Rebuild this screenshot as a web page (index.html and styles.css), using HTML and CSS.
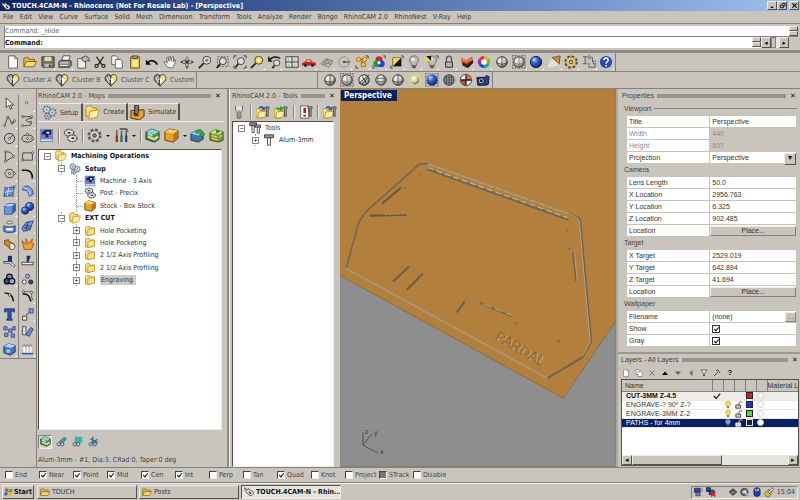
FILE: index.html
```html
<!DOCTYPE html>
<html lang="en">
<head>
<meta charset="utf-8">
<title>TOUCH.4CAM-N - Rhinoceros</title>
<link rel="stylesheet" href="styles.css">
</head>
<body>
<svg class="defs" aria-hidden="true">
<defs>
<radialGradient id="gWhite" cx=".35" cy=".3" r=".8"><stop offset="0" stop-color="#fff"/><stop offset=".5" stop-color="#ccc"/><stop offset="1" stop-color="#555"/></radialGradient>
<radialGradient id="gBlue" cx=".35" cy=".3" r=".8"><stop offset="0" stop-color="#bcd8ff"/><stop offset=".35" stop-color="#3a66d0"/><stop offset="1" stop-color="#0a1c60"/></radialGradient>
<radialGradient id="gYel"><stop offset="0" stop-color="#fff"/><stop offset=".6" stop-color="#eee7b0"/><stop offset="1" stop-color="#e2b81c"/></radialGradient>
<linearGradient id="gFold" x2="1" y2="1"><stop offset="0" stop-color="#fff3a8"/><stop offset="1" stop-color="#e8b02c"/></linearGradient>
</defs>
<symbol id="new" viewBox="0 0 16 16"><path d="M3 1h7l3 3v11H3z" fill="#fff" stroke="#555"/><path d="M10 1v3h3" fill="#ddd" stroke="#555"/></symbol>
<symbol id="open" viewBox="0 0 16 16"><path d="M1 13V4l1-1h4l1 2h6v3" fill="#e8b83c" stroke="#7a5a10"/><path d="M1 13.500l3-6h11.500l-3 6z" fill="#f8dc70" stroke="#7a5a10"/></symbol>
<symbol id="save" viewBox="0 0 16 16"><path d="M1 2h14v12H2l-1-1z" fill="#77744c" stroke="#333"/><path d="M4 2h8v5H4z" fill="#d8d8d0"/><path d="M4 10h8v4H4z" fill="#bbb"/><path d="M9 11h2v3H9z" fill="#333"/></symbol>
<symbol id="print" viewBox="0 0 16 16"><path d="M4 7l2-6h8l-2 6z" fill="#fff" stroke="#444"/><path d="M1 8l2-2h10l2 1v5l-2 2H1z" fill="#888" stroke="#222"/><path d="M2 9h10M2 12h9" stroke="#eee"/></symbol>
<symbol id="props" viewBox="0 0 16 16"><path d="M2 4h9v11H2z" fill="#eee" stroke="#555"/><path d="M7 3l4-2 4 3v3l-2-1-3 2-3-2z" fill="#bbb" stroke="#333"/></symbol>
<symbol id="cut" viewBox="0 0 16 16"><path d="M4 2l6 9M12 2l-6 9" stroke="#222" stroke-width="1.500"/><circle cx="4" cy="12.500" r="1.800" fill="none" stroke="#222" stroke-width="1.300"/><circle cx="12" cy="12.500" r="1.800" fill="none" stroke="#222" stroke-width="1.300"/></symbol>
<symbol id="copy" viewBox="0 0 16 16"><path d="M2 1h5l2 2v8H2z" fill="#fff" stroke="#555"/><path d="M6 5h6l2 2v8H6z" fill="#fff" stroke="#555"/></symbol>
<symbol id="paste" viewBox="0 0 16 16"><path d="M3 2h10v13H3z" fill="#eecb46" stroke="#5c4a14"/><path d="M5 1h6v3H5z" fill="#999" stroke="#444"/><path d="M5 6h6v7H5z" fill="#f8ec9c"/></symbol>
<symbol id="undo" viewBox="0 0 16 16"><path d="M1 5v6h6z" fill="#111"/><path d="M3 9c3-4 9-3 11 2" fill="none" stroke="#111" stroke-width="2"/></symbol>
<symbol id="hand" viewBox="0 0 16 16"><path d="M5 14L1 8l1-1 3 2-1-6 1.500-.500L7 7l0-5.500h1.500L9.500 7l1-5H12l0 6 1.500-3 1.300.500L13 11l-2 4z" fill="#eee" stroke="#666"/></symbol>
<symbol id="rot" viewBox="0 0 16 16"><ellipse cx="8" cy="8" rx="6" ry="2" fill="none" stroke="#666"/><ellipse cx="8" cy="8" rx="2" ry="6" fill="none" stroke="#666"/><path d="M8 6.500v3M6.500 8h3" stroke="#222" stroke-width="1.500"/><path d="M0 8l3-2v4zM16 8l-3-2v4zM8 16l-2-3h4z" fill="#444"/></symbol>
<symbol id="zm" viewBox="0 0 16 16"><circle cx="10" cy="6" r="4.500" fill="#ddd" stroke="#333"/><path d="M6.500 9.500L1 15" stroke="#222" stroke-width="2"/><path d="M8 6h4M10 4v4" stroke="#555"/></symbol>
<symbol id="zmw" viewBox="0 0 16 16"><path d="M3 2h12v11H3z" fill="none" stroke="#555" stroke-dasharray="2 1.500"/><circle cx="9" cy="7" r="4" fill="#ddd" stroke="#333"/><path d="M6 10l-4 5" stroke="#222" stroke-width="2"/></symbol>
<symbol id="zme" viewBox="0 0 16 16"><path d="M1 4V1h3M12 1h3v3M15 12v3h-3M4 15H1v-3" fill="none" stroke="#333"/><circle cx="9" cy="7" r="4" fill="#ddd" stroke="#333"/><path d="M6 10l-3 4" stroke="#222" stroke-width="2"/></symbol>
<symbol id="zms" viewBox="0 0 16 16"><circle cx="10" cy="6" r="4.500" fill="#f2e05a" stroke="#333"/><circle cx="10" cy="6" r="1.500" fill="#fff"/><path d="M6.500 9.500L1 15" stroke="#222" stroke-width="2"/></symbol>
<symbol id="zmu" viewBox="0 0 16 16"><path d="M1 2v5h4M2 6c2-4 8-5 12-2" fill="none" stroke="#111" stroke-width="1.700"/><circle cx="10" cy="9" r="3.500" fill="#ddd" stroke="#333"/><path d="M7.500 12L5 15" stroke="#222" stroke-width="2"/></symbol>
<symbol id="four" viewBox="0 0 16 16"><path d="M1 2h14v12H1zM8 2v12M1 8h14" fill="#ddd" stroke="#333"/><path d="M4 4v3M11 4v3M4 10v3M11 10v3" stroke="#aaa"/></symbol>
<symbol id="car" viewBox="0 0 16 16"><path d="M0 9l3-1 2-3h5l2 3 4 1v3H0z" fill="#d01c1c"/><path d="M5.500 6h4l1 2h-6z" fill="#faa"/><circle cx="4" cy="12" r="1.700" fill="#222"/><circle cx="12" cy="12" r="1.700" fill="#222"/></symbol>
<symbol id="cpl" viewBox="0 0 16 16"><path d="M1 10l6-6 8 3-5 7zM4 7l8 4M7 5l6 5M3 9l6-4M6 12l7-6M4 11l4-6" fill="none" stroke="#776"/><circle cx="6" cy="9" r="2" fill="#a88" /></symbol>
<symbol id="cir" viewBox="0 0 16 16"><circle cx="8" cy="8" r="6" fill="none" stroke="#888"/><path d="M8 8h7" stroke="#222"/><circle cx="8" cy="8" r="1.300" fill="#444"/></symbol>
<symbol id="sel" viewBox="0 0 16 16"><path d="M12 1h3v3M4 15H1v-3" fill="none" stroke="#333"/><path d="M6 5h4M9 9l-3-3" stroke="#333"/><circle cx="4" cy="5" r="2.500" fill="#f4c83c" stroke="#b06a10"/><path d="M9 3h4v4H9z" fill="#f8e070" stroke="#b06a10"/><path d="M7 9h5v4H7z" fill="#f4c83c" stroke="#b06a10"/></symbol>
<symbol id="rgb" viewBox="0 0 16 16"><circle cx="8" cy="5.500" r="4" fill="#d82020"/><circle cx="5.500" cy="10" r="4" fill="#18a030"/><circle cx="10.500" cy="10" r="4" fill="#2040d0"/><path d="M8 6l2 3-2 2-2-2z" fill="#fff"/><path d="M13 1h2v3M1 12v3h2" fill="none" stroke="#333"/></symbol>
<symbol id="diag" viewBox="0 0 16 16"><path d="M3 3h10v10H3z" fill="#111"/><path d="M3.500 3.500h9l-9 9z" fill="#f8e020"/><path d="M13 1h2v3M1 12v3h2" fill="none" stroke="#333"/></symbol>
<symbol id="bulb" viewBox="0 0 16 16"><path d="M5 10C1 6 3 1 8 1s7 5 3 9v2H5z" fill="#bbb" stroke="#666"/><circle cx="7" cy="5" r="2" fill="#eee"/><path d="M6 12h4v3H6z" fill="#555"/></symbol>
<symbol id="bulb2" viewBox="0 0 16 16"><use href="#bulb"/><path d="M1 1h6v6z" fill="#111"/><path d="M1 1v6h6z" fill="#f8e020"/><path d="M12 1h3v3" fill="none" stroke="#333"/></symbol>
<symbol id="lock" viewBox="0 0 16 16"><path d="M5 8V5c0-5 6-5 6 0v3" fill="none" stroke="#555" stroke-width="1.500"/><path d="M4 8h8v6H4z" fill="#999" stroke="#333"/><path d="M6 10h4M6 12h4" stroke="#ddd"/></symbol>
<symbol id="lay" viewBox="0 0 16 16"><path d="M2 8l6 2 7-5v4l-6 6-6-3z" fill="#222"/><path d="M1 3l6 3 7-4v4l-6 5-6-3z" fill="#c8301c"/><path d="M1 3l6 3 7-3v3l-7 3-6-3z" fill="#f07840"/></symbol>
<symbol id="wheel" viewBox="0 0 16 16"><g fill="none" stroke-width="4"><path d="M8 3a5 5 0 0 1 4.330 2.500" stroke="#e0b020"/><path d="M12.330 5.500a5 5 0 0 1 0 5" stroke="#70b830"/><path d="M12.330 10.500A5 5 0 0 1 8 13" stroke="#20a0a0"/><path d="M8 13a5 5 0 0 1-4.330-2.500" stroke="#3048d0"/><path d="M3.670 10.500a5 5 0 0 1 0-5" stroke="#a028b0"/><path d="M3.670 5.500A5 5 0 0 1 8 3" stroke="#e03030"/></g><circle cx="8" cy="8" r="3.200" fill="#fff"/></symbol>
<symbol id="sph" viewBox="0 0 16 16"><circle cx="8" cy="8" r="6" fill="url(#gWhite)" stroke="#222"/><path d="M8 2v12M2 9c4 2 8 2 12 0" fill="none" stroke="#444"/></symbol>
<symbol id="sphs" viewBox="0 0 16 16"><path d="M0 1h16M0 15h16M1 0v16M15 0v16M0 4h16M0 12h16M4 0v16M12 0v16" stroke="#555" stroke-dasharray="1 1"/><circle cx="8" cy="8" r="6" fill="url(#gWhite)" stroke="#333"/><path d="M8 2v12M2 9c4 2 8 2 12 0" fill="none" stroke="#777"/></symbol>
<symbol id="sphc" viewBox="0 0 16 16"><circle cx="8" cy="8" r="6" fill="url(#gWhite)" stroke="#222"/><path d="M2 12L14 2M5 13l8-8M6 4l5 8" stroke="#222"/></symbol>
<symbol id="spha" viewBox="0 0 16 16"><circle cx="8" cy="8" r="6" fill="url(#gWhite)" stroke="#333"/><path d="M5 3c-1 3-1 7 0 10M11 3c1 3 1 7 0 10M2 6h12M2 10h12" fill="none" stroke="#666"/></symbol>
<symbol id="sphd" viewBox="0 0 16 16"><circle cx="8" cy="8" r="6" fill="#aaa" stroke="#222"/><path d="M5 3v10M8 2v12M11 3v10M3 5h10M2 8h12M3 11h10" stroke="#444"/></symbol>
<symbol id="sphy" viewBox="0 0 16 16"><circle cx="8" cy="8" r="7" fill="#f0d848"/><circle cx="8" cy="8" r="5" fill="url(#gWhite)"/></symbol>
<symbol id="blue" viewBox="0 0 16 16"><circle cx="8" cy="8" r="6.500" fill="url(#gBlue)" stroke="#0a1850"/></symbol>
<symbol id="blues" viewBox="0 0 16 16"><path d="M0 1h16M0 15h16M1 0v16M15 0v16M0 4h16M0 12h16" stroke="#555" stroke-dasharray="1 1"/><circle cx="8" cy="8" r="6.500" fill="url(#gBlue)"/></symbol>
<symbol id="spot" viewBox="0 0 16 16"><path d="M1 14c0-4 3-9 7-10l6 4c-2 5-6 7-13 6z" fill="#e4ddd0"/><path d="M6 3l9-2-1 9z" fill="#d88830" stroke="#553"/></symbol>
<symbol id="gear" viewBox="0 0 16 16"><circle cx="8" cy="8" r="5.800" fill="none" stroke="#443" stroke-width="3.600" stroke-dasharray="2.600 1.950"/><circle cx="8" cy="8" r="5.300" fill="none" stroke="#443" stroke-width="1"/><circle cx="8" cy="8" r="4" fill="none" stroke="#e8c85c" stroke-width="3"/><circle cx="8" cy="8" r="2" fill="#c9c5bd" stroke="#443"/></symbol>
<symbol id="dim" viewBox="0 0 16 16"><path d="M1 2h5M1 10h5M3.500 2v8M8 9v5h7V9M7 3h5v5" fill="none" stroke="#555"/><circle cx="8" cy="2.500" r="1.500" fill="#eee" stroke="#555"/><path d="M13 7h3v3h-3z" fill="#eee" stroke="#555"/></symbol>
<symbol id="help" viewBox="0 0 16 16"><circle cx="8" cy="8" r="7" fill="#2848b8"/><path d="M5.500 6c0-3.500 5-3.500 5 0 0 2-2.500 2-2.500 4" fill="none" stroke="#fff" stroke-width="1.600"/><circle cx="8" cy="12.200" r="1" fill="#fff"/></symbol>
<symbol id="ball4" viewBox="0 0 16 16"><circle cx="8" cy="8" r="6.500" fill="#eee" stroke="#335"/><path d="M8 8V1.500A6.500 6.500 0 0 1 14.500 8z" fill="#e07048"/><path d="M8 8v6.500A6.500 6.500 0 0 1 1.500 8z" fill="#c84830"/><path d="M8 2v12M2 8h12" stroke="#223" stroke-width="1.500"/></symbol>
<symbol id="cam" viewBox="0 0 16 16"><path d="M1 5h9l3-3 2 2-1 9-3 1H2z" fill="#284088" stroke="#112"/><circle cx="6" cy="9" r="3.500" fill="#9ac" stroke="#112"/><circle cx="6" cy="9" r="1.500" fill="#123"/><path d="M12 2l2-1 1 3" fill="#ddd"/></symbol>
<symbol id="clus" viewBox="0 0 16 16"><path d="M8 15L1.500 8C0 2 6 0 8 3.500z" fill="#777" stroke="#333"/><path d="M8 15l6.500-7C16 2 10 0 8 3.500z" fill="#f0dc78" stroke="#333"/><path d="M3 5l3 6M5 3l2 5" stroke="#ddd" stroke-width="1.500"/><path d="M8 5l3 3-3 5z" fill="#fff"/></symbol>
<symbol id="ptr" viewBox="0 0 16 16"><path d="M4 1v12l3-3 2 5 2-1-2-4h4z" fill="#fff" stroke="#222"/></symbol>
<symbol id="pt" viewBox="0 0 16 16"><circle cx="7" cy="7" r="1.500" fill="#fff" stroke="#444"/></symbol>
<symbol id="pl" viewBox="0 0 16 16"><path d="M2 13L6 2l5 8 3-1" fill="none" stroke="#333"/><g fill="#fff" stroke="#333"><circle cx="2" cy="13" r="1.200"/><circle cx="6" cy="3" r="1.200"/><circle cx="11" cy="10" r="1.200"/><circle cx="14" cy="7" r="1.200"/></g></symbol>
<symbol id="crv" viewBox="0 0 16 16"><path d="M2 2h11v2C4 5 4 8 12 9c3 3-2 5-10 4" fill="none" stroke="#333"/><g fill="#fff" stroke="#333"><circle cx="2" cy="2" r="1.200"/><circle cx="13" cy="2" r="1.200"/><circle cx="12" cy="9" r="1.200"/><circle cx="2" cy="13" r="1.200"/></g></symbol>
<symbol id="circ" viewBox="0 0 16 16"><circle cx="8" cy="8" r="6.300" fill="none" stroke="#333" stroke-width="1.200"/><path d="M8 8l4-4" stroke="#333"/><circle cx="8" cy="8" r="1.300" fill="#fff" stroke="#333"/></symbol>
<symbol id="ell" viewBox="0 0 16 16"><ellipse cx="8" cy="8" rx="7" ry="4.500" fill="none" stroke="#333" stroke-width="1.200"/><g fill="#fff" stroke="#333"><circle cx="8" cy="8" r="1.300"/><circle cx="14" cy="8" r="1.300"/><circle cx="8" cy="3" r="1.300"/></g></symbol>
<symbol id="arc" viewBox="0 0 16 16"><path d="M3 2c6 0 9 3 10 6L3 14z" fill="none" stroke="#333"/><g fill="#fff" stroke="#333"><circle cx="3" cy="2" r="1.300"/><circle cx="13" cy="8" r="1.300"/><circle cx="3" cy="14" r="1.300"/></g></symbol>
<symbol id="rect" viewBox="0 0 16 16"><path d="M2 3.500h12v9H2z" fill="none" stroke="#333"/><g fill="#fff" stroke="#333"><circle cx="14" cy="3.500" r="1.300"/><circle cx="2" cy="12.500" r="1.300"/></g></symbol>
<symbol id="poly" viewBox="0 0 16 16"><path d="M5 3h6l3 5-3 5H5L2 8z" fill="none" stroke="#333"/><circle cx="8" cy="8" r="1.300" fill="#fff" stroke="#333"/><circle cx="14" cy="8" r="1.300" fill="#fff" stroke="#333"/></symbol>
<symbol id="fil" viewBox="0 0 16 16"><path d="M1 4h5c5 0 8 3 8 10" fill="none" stroke="#111" stroke-width="2"/></symbol>
<symbol id="srf" viewBox="0 0 16 16"><path d="M3 4l11-2-2 11-11 1z" fill="#6890d8" stroke="#223a80"/><path d="M7 3L5 14M2 9l11-2" stroke="#dfe8fa"/><g fill="#fff" stroke="#333"><circle cx="3" cy="4" r="1.200"/><circle cx="14" cy="2" r="1.200"/><circle cx="12" cy="13" r="1.200"/></g></symbol>
<symbol id="bend" viewBox="0 0 16 16"><path d="M2 3l5-2c5 1 8 5 8 10l-5 3c0-5-3-8-8-8z" fill="#7ea2e0" stroke="#223a80"/><path d="M2 3c5 0 9 4 9 10" fill="none" stroke="#dfe8fa"/></symbol>
<symbol id="box" viewBox="0 0 16 16"><path d="M2 5l4-3h9v9l-4 4H2z" fill="#3c64b8" stroke="#1a2c68"/><path d="M2 5h9v10H2z" fill="#6c94dc"/><path d="M2 5l4-3h9l-4 3z" fill="#c0d4f8"/></symbol>
<symbol id="balls" viewBox="0 0 16 16"><circle cx="10.500" cy="5.500" r="5" fill="url(#gBlue)" stroke="#1a2c68"/><circle cx="5" cy="10.500" r="4.500" fill="url(#gBlue)" stroke="#1a2c68"/></symbol>
<symbol id="cyl" viewBox="0 0 16 16"><ellipse cx="8" cy="3" rx="4" ry="1.800" fill="#ddd" stroke="#555"/><path d="M1 7c4 2 10 2 14 0v7c-4 2-10 2-14 0z" fill="#5c84d0" stroke="#223a80"/><path d="M4 10h8v3H4z" fill="#fff"/></symbol>
<symbol id="mesh" viewBox="0 0 16 16"><path d="M1 10l5-7 9-2-4 11-8 2z" fill="#7898d8" stroke="#223a80"/><path d="M4 6l9 2M3 9l9 2M9 2L6 13" stroke="#1c3070"/></symbol>
<symbol id="puz" viewBox="0 0 16 16"><path d="M2 3l5-1 1 3 4 1 3 4-3 4-4-1-2-3-4-2z" fill="#d8871c" stroke="#6a3c08"/><path d="M8 8l3-2 4 4-2 4h-4z" fill="#f4ecd0" stroke="#654"/></symbol>
<symbol id="expl" viewBox="0 0 16 16"><path d="M1 3l5 5V1l3 6 5-6-1 6h3l-3 7H4z" fill="#f0a030" stroke="#a05008"/></symbol>
<symbol id="trim" viewBox="0 0 16 16"><path d="M6 1h5v8H6z" fill="#1c3070"/><path d="M1 8h8l6 5-2 2-5-5H1z" fill="#eee" stroke="#333"/></symbol>
<symbol id="split" viewBox="0 0 16 16"><path d="M7 1h5l-3 8H7z" fill="#1c3070"/><path d="M1 9h14v3H1z" fill="#eee" stroke="#333"/></symbol>
<symbol id="grp" viewBox="0 0 16 16"><circle cx="8" cy="5" r="3.500" fill="#889" stroke="#112" stroke-width="1.500"/><circle cx="5" cy="10" r="3.500" fill="#446" stroke="#112" stroke-width="1.500"/><circle cx="11" cy="10" r="3.500" fill="#9ad" stroke="#112" stroke-width="1.500"/></symbol>
<symbol id="ungrp" viewBox="0 0 16 16"><circle cx="8" cy="4" r="2.500" fill="#9ab8f0" stroke="#336"/><circle cx="4" cy="11" r="2.500" fill="#fff" stroke="#333"/><circle cx="12" cy="11" r="2.500" fill="#445" stroke="#112"/></symbol>
<symbol id="ptc" viewBox="0 0 16 16"><path d="M2 4c6-1 10 3 11 10" fill="none" stroke="#111" stroke-width="1.800"/><circle cx="8" cy="6" r="1.500" fill="#fff" stroke="#333"/></symbol>
<symbol id="ptc2" viewBox="0 0 16 16"><path d="M2 5c6-1 9 3 10 9" fill="none" stroke="#111" stroke-width="1.800"/><path d="M3 2h10v7" fill="none" stroke="#666"/><g fill="#fff" stroke="#333"><circle cx="3" cy="2" r="1.300"/><circle cx="13" cy="3" r="1.300"/><circle cx="13" cy="11" r="1.300"/></g></symbol>
<symbol id="txt" viewBox="0 0 16 16"><path d="M2 1h12v4h-1.500L12 3.500h-2V13l1.500 1v1h-7v-1L6 13V3.500H4L3.500 5H2z" fill="#2c58b4" stroke="#1a2c68"/></symbol>
<symbol id="mov" viewBox="0 0 16 16"><path d="M2 10h5v5H2z" fill="#eee" stroke="#333"/><path d="M10 1h5v5h-5z" fill="#7ea2e0" stroke="#223a80"/><path d="M6 9l4-3" stroke="#333"/></symbol>
<symbol id="arr" viewBox="0 0 16 16"><g fill="#7ea2e0" stroke="#223a80"><path d="M1 2h4v4H1zM7 5h4v4H7zM12 2h3v4h-3zM2 10h4v4H2zM10 11h4v4h-4z"/></g></symbol>
<symbol id="rotc" viewBox="0 0 16 16"><path d="M2 2h4v10H2z" fill="#eee" stroke="#333"/><path d="M12 3l3 2-5 9-4-2z" fill="#6890d8" stroke="#223a80"/></symbol>
<symbol id="boxed" viewBox="0 0 16 16"><path d="M1 4l6-3 8 2v8l-6 4-8-3z" fill="#4870c0" stroke="#1a2c68"/><path d="M1 4l6-3 8 2-5 3z" fill="#b8d0f8"/><path d="M4 8h5v4H4z" fill="#9cc0f4"/></symbol>
<symbol id="ups" viewBox="0 0 16 16"><path d="M1 13h14" stroke="#2c58b4" stroke-width="2"/><path d="M4 12V3M8 12V3M12 12V3" stroke="#fff" stroke-width="2"/><path d="M2.500 4.500L4 2l1.500 2.500M6.500 4.500L8 2l1.500 2.500M10.500 4.500L12 2l1.500 2.500" fill="none" stroke="#555"/></symbol>
<symbol id="gears" viewBox="0 0 16 16"><g fill="none" stroke="#667" stroke-width="2.500" stroke-dasharray="1.500 1"><circle cx="5" cy="5" r="3.300"/><circle cx="11" cy="8" r="3.300"/><circle cx="6" cy="12" r="2.600"/></g><g fill="#dfe6ee" stroke="#7890ac"><circle cx="5" cy="5" r="3"/><circle cx="11" cy="8" r="3"/><circle cx="6" cy="12" r="2.300"/></g><g fill="#667"><circle cx="5" cy="5" r="1"/><circle cx="11" cy="8" r="1"/><circle cx="6" cy="12" r="1"/></g></symbol>
<symbol id="gear1" viewBox="0 0 16 16"><circle cx="8" cy="8" r="6" fill="none" stroke="#555" stroke-width="3" stroke-dasharray="2.700 2"/><circle cx="8" cy="8" r="5" fill="#dcdcdc" stroke="#666"/><circle cx="8" cy="8" r="2" fill="#888" stroke="#333"/></symbol>
<symbol id="post" viewBox="0 0 16 16"><ellipse cx="6.500" cy="5" rx="5" ry="3.500" fill="#ddd" stroke="#555" stroke-width="1.500" stroke-dasharray="2 .700"/><ellipse cx="10" cy="11" rx="5" ry="3.500" fill="#ddd" stroke="#555" stroke-width="1.500" stroke-dasharray="2 .700"/><path d="M5 5h3M9 11h3" stroke="#222" stroke-width="1.500"/></symbol>
<symbol id="mach" viewBox="0 0 16 16"><path d="M1 1h14v14H1z" fill="#7486bc"/><path d="M3 5l4-3h6v5h-3v3H7V7H3z" fill="#16204c"/><path d="M8 4h3v2H8z" fill="#dfe8fa"/><path d="M2 12h12v2H2z" fill="#cdd8f0"/></symbol>
<symbol id="fold" viewBox="0 0 16 16"><path d="M2 3l3-1h2l1 2h6v8l-8 2-4-1z" fill="url(#gFold)" stroke="#b08420"/><path d="M5 6l9-2v8l-9 2z" fill="#fbe486" stroke="#c0922c"/></symbol>
<symbol id="folds" viewBox="0 0 16 16"><path d="M1 2l3-1h3l1 2h4v8l-8 2-3-1z" fill="url(#gFold)" stroke="#b08420"/><path d="M5 7l10-2-2 8-9 2z" fill="#fdf0a8" stroke="#c0922c"/></symbol>
<symbol id="stock" viewBox="0 0 16 16"><path d="M1 4l5-3 9 2v8l-5 4-9-2z" fill="#e8a028" stroke="#5c3a08"/><path d="M1 4l5-3 9 2-5 3z" fill="#fbd060"/><path d="M10 6v9l5-4V3z" fill="#b87418"/></symbol>
<symbol id="sim" viewBox="0 0 16 16"><path d="M1 6l14-1v7l-5 4-9-2z" fill="#e8a028" stroke="#4c3008"/><path d="M3 8l6 1v3H5z" fill="#5c3a08"/><path d="M5 0h4v8L7 10 5 8z" fill="#777" stroke="#222"/></symbol>
<symbol id="tl" viewBox="0 0 16 16"><path d="M3 2v12M8 3v11M13 3v11" stroke="#555" stroke-width="1.500"/><path d="M3 8v7" stroke="#c02020" stroke-width="2.500"/><path d="M8 8v7" stroke="#208040" stroke-width="2.500"/><path d="M13 8v7" stroke="#2040b0" stroke-width="2.500"/><path d="M6 1h7l2 3" fill="none" stroke="#666" stroke-width="2"/></symbol>
<symbol id="stk" viewBox="0 0 16 16"><path d="M1 4l6-3 8 3v8l-5 3-9-3z" fill="#3c9460" stroke="#1c3c48"/><path d="M1 4l6-3 8 3-5 3z" fill="#8cd8c0"/><path d="M3 9l7 3 4-3" fill="none" stroke="#f4d860" stroke-width="2.500"/><path d="M3 6l5 2" stroke="#bfe0f8" stroke-width="2"/></symbol>
<symbol id="stkb" viewBox="0 0 16 16"><path d="M1 6l5-3 8 2v7l-5 3-8-2z" fill="#3c78a0" stroke="#1c3c48"/><path d="M1 6l5-3 8 2-5 3z" fill="#9cd0ec"/><path d="M6 5c1-5 8-4 8 1h2l-3 4-3-4h2c0-2-3-2-4 0z" fill="#38b038" stroke="#146014" stroke-width=".600"/></symbol>
<symbol id="stkg" viewBox="0 0 16 16"><path d="M1 5l5-3 9 2v9l-5 2-9-2z" fill="#76a040" stroke="#3c4c10"/><path d="M1 5l5-3 9 2-5 3z" fill="#d8e090"/><path d="M3 8l6 2M3 11l6 2M11 9l3-1" stroke="#e0c860" stroke-width="1.500"/><path d="M8 1l4 3-5 2z" fill="#209020"/></symbol>
<symbol id="tool" viewBox="0 0 16 16"><path d="M4 1v4c0 2 2 2 2 3v7h4V8c0-1 2-1 2-3V1" fill="#ddd" stroke="#555"/><path d="M8 6v9" stroke="#444"/></symbol>
<symbol id="bit" viewBox="0 0 16 16"><path d="M2 1h12v4H2z" fill="#999" stroke="#222"/><path d="M6 5h4v10H6z" fill="#eee" stroke="#333"/></symbol>
<symbol id="bits" viewBox="0 0 16 16"><path d="M1 1h9v4H1z" fill="#888" stroke="#222"/><path d="M4 5h3v9H4z" fill="#eee" stroke="#333"/><path d="M8 4h8v3H8z" fill="#aaa" stroke="#222"/><path d="M11 7h3v8h-3z" fill="#eee" stroke="#333"/></symbol>
<symbol id="ft" viewBox="0 0 16 16"><path d="M0 5l2-1h2l1 2h5v8l-7 1-3-1z" fill="url(#gFold)" stroke="#b08420"/><path d="M3 8l9-1-2 7-8 1z" fill="#fdf0a8" stroke="#c0922c"/><path d="M3 3c2-3 5-2 6 0l2-1-1 4-4-1 1-1c-1-1-2-1-3 0z" fill="#2858b8"/><path d="M11 2h4v2h-1v9h-2V4h-1z" fill="#999" stroke="#333" stroke-width=".700"/></symbol>
<symbol id="ftg" viewBox="0 0 16 16"><path d="M0 5l2-1h2l1 2h5v8l-7 1-3-1z" fill="url(#gFold)" stroke="#b08420"/><path d="M3 8l9-1-2 7-8 1z" fill="#fdf0a8" stroke="#c0922c"/><path d="M2 3h5V1l4 3-4 3V5H2z" fill="#28a030"/><path d="M11 2h4v2h-1v9h-2V4h-1z" fill="#999" stroke="#333" stroke-width=".700"/></symbol>
<symbol id="warn" viewBox="0 0 16 16"><path d="M2 1h9v14H2z" fill="#fff" stroke="#555"/><path d="M5 3h3v6H5zM5 11h3v2H5z" fill="#c01818"/><path d="M10 2h5v2h-1v9h-2V4h-2z" fill="#999" stroke="#333" stroke-width=".700"/></symbol>
<symbol id="gog" viewBox="0 0 16 16"><circle cx="4" cy="12" r="2.500" fill="#bcd" stroke="#234"/><circle cx="9" cy="12" r="2.500" fill="#bcd" stroke="#234"/><path d="M5 8l7-6 3 2-5 6z" fill="#48a8a0" stroke="#255"/></symbol>
<symbol id="gog2" viewBox="0 0 16 16"><path d="M4 1h11v9H4z" fill="#40b4a8"/><circle cx="4" cy="12" r="2.500" fill="#bcd" stroke="#234"/><circle cx="9" cy="12" r="2.500" fill="#bcd" stroke="#234"/></symbol>
<symbol id="gog3" viewBox="0 0 16 16"><path d="M7 1v9M3 4l11 6M14 5l-9 5" stroke="#468" stroke-width="2"/><circle cx="4" cy="12" r="2.500" fill="#9bd" stroke="#248"/><circle cx="10" cy="12" r="2.500" fill="#9bd" stroke="#248"/></symbol>
<symbol id="ybulb" viewBox="0 0 8 10"><path d="M2.500 6C-.500 3.500 1 .500 4 .500S8.500 3.500 5.500 6v1h-3z" fill="currentColor" stroke="#a08a20" stroke-width=".700"/><path d="M3 7h2v2H3z" fill="#555"/></symbol>
<symbol id="ulock" viewBox="0 0 10 10"><path d="M5 5V3c0-3 4-2 4-1" fill="none" stroke="currentColor"/><path d="M1 5h6v4H1z" fill="#ccc" stroke="currentColor"/></symbol>
<symbol id="flag" viewBox="0 0 16 16"><path d="M2 3c2-1 3-1 5 0L6 8C4 7 3 7 1 8z" fill="#e04820"/><path d="M8 3c2 1 4 1 6 0l-1 5c-2 1-4 1-6 0z" fill="#48a830"/><path d="M1 9c2-1 3-1 5 0l-1 5c-2-1-3-1-5 0z" fill="#2860d0"/><path d="M7 9c2 1 4 1 6 0l-1 5c-2 1-4 1-6 0z" fill="#f0c020"/></symbol>
<symbol id="rhino" viewBox="0 0 16 16"><path d="M1 1l4 4 2-3 2 3 5 2 1 4-3 3-4-1-3-3-3-4z" fill="#ddd" stroke="#222"/><path d="M8 8l3 3" stroke="#222" stroke-width="2"/></symbol>
<symbol id="net" viewBox="0 0 16 16"><path d="M1 2h9v7H1z" fill="#2848a8" stroke="#112"/><path d="M3 11h7v3H3z" fill="#8898b8" stroke="#224"/><path d="M12 2c2 2 2 4 0 6" fill="none" stroke="#666"/></symbol>
<symbol id="netx" viewBox="0 0 16 16"><path d="M0 1h7v6H0zM5 5h8v7H5z" fill="#2848a8" stroke="#112"/><path d="M8 8l7 7M15 8l-7 7" stroke="#d82020" stroke-width="2.500"/></symbol>
<symbol id="dia" viewBox="0 0 16 16"><path d="M8 2l7 6-7 6-7-6z" fill="#444"/><path d="M5 7h6v3H5z" fill="#888"/></symbol>
<symbol id="vol" viewBox="0 0 16 16"><circle cx="7" cy="8" r="6" fill="#666" stroke="#333"/><path d="M4 6h3l3-2v8l-3-2H4z" fill="#ddd"/><circle cx="12" cy="12" r="3" fill="#9ab0e0"/></symbol>
<symbol id="mouse" viewBox="0 0 16 16"><path d="M3 5c0-5 10-5 10 0v7c0 4-10 4-10 0z" fill="#2040b8" stroke="#112"/><path d="M5 3h6v3H5z" fill="#f0e8e0"/><path d="M6 3h3v2H6z" fill="#d02020"/></symbol>
<symbol id="pen" viewBox="0 0 16 16"><path d="M1 10l6-6 6 3-4 8H3z" fill="#e8c030" stroke="#543"/><path d="M6 8l8-7 1 3-7 7z" fill="#eee" stroke="#222"/></symbol>
</svg>

<header class="titlebar">
  <svg class="i10"><use href="#rhino"/></svg>
  <h1>TOUCH.4CAM-N - Rhinoceros (Not For Resale Lab) - [Perspective]</h1>
  <div class="winbtns">
    <button aria-label="Minimize"><svg viewBox="0 0 8 8"><path d="M2 6h3" stroke="#000" stroke-width="1.500"/></svg></button>
    <button aria-label="Restore"><svg viewBox="0 0 8 8"><path d="M3 1.500h4v3H5M1.500 3.500h3.500v3H1.500z" fill="none" stroke="#000"/></svg></button>
    <button class="close" aria-label="Close"><svg viewBox="0 0 8 8"><path d="M1.500 1.500l5 5M6.500 1.500l-5 5" stroke="#000" stroke-width="1.200"/></svg></button>
  </div>
</header>
<nav class="menu">
  <div class="items"><a href="#">File</a><a href="#">Edit</a><a href="#">View</a><a href="#">Curve</a><a href="#">Surface</a><a href="#">Solid</a><a href="#">Mesh</a><a href="#">Dimension</a><a href="#">Transform</a><a href="#">Tools</a><a href="#">Analyze</a><a href="#">Render</a><a href="#">Bongo</a><a href="#">RhinoCAM 2.0</a><a href="#">RhinoNest</a><a href="#">V-Ray</a><a href="#">Help</a></div>
</nav>
<section class="command">
  <div class="cmdrow"><output>Command: _Hide</output><div class="spin"><button aria-label="Scroll up"></button><button aria-label="Scroll down"></button></div></div>
  <div class="cmdrow prompt"><label for="cmd">Command:</label><input id="cmd" type="text"><div class="spin"><button aria-label="Up"></button><button aria-label="Down"></button></div><button class="sq" aria-label="Left">◂</button><span class="thumb"></span><span class="trough"></span><button class="sq" aria-label="Right">▸</button><span class="corner"></span></div>
</section>
<div class="bar bar1">
  <div class="std">
<button aria-label="New"><svg><use href="#new"/></svg></button><button aria-label="Open"><svg><use href="#open"/></svg></button><button class="fly" aria-label="Save"><svg><use href="#save"/></svg></button><button class="fly" aria-label="Print"><svg><use href="#print"/></svg></button><button aria-label="Properties"><svg><use href="#props"/></svg></button><button aria-label="Cut"><svg><use href="#cut"/></svg></button><button aria-label="Copy"><svg><use href="#copy"/></svg></button><button aria-label="Paste"><svg><use href="#paste"/></svg></button><button class="fly" aria-label="Undo"><svg><use href="#undo"/></svg></button><button aria-label="Pan"><svg><use href="#hand"/></svg></button><button aria-label="Rotate view"><svg><use href="#rot"/></svg></button><button aria-label="Zoom"><svg><use href="#zm"/></svg></button><button aria-label="Zoom window"><svg><use href="#zmw"/></svg></button><button class="fly" aria-label="Zoom extents"><svg><use href="#zme"/></svg></button><button class="fly" aria-label="Zoom selected"><svg><use href="#zms"/></svg></button><button class="fly" aria-label="Undo view"><svg><use href="#zmu"/></svg></button><button class="fly" aria-label="Viewports"><svg><use href="#four"/></svg></button><button class="fly" aria-label="Named views"><svg><use href="#car"/></svg></button><button class="fly" aria-label="CPlane"><svg><use href="#cpl"/></svg></button><button class="fly" aria-label="Object snap"><svg><use href="#cir"/></svg></button><button class="fly" aria-label="Select"><svg><use href="#sel"/></svg></button><button class="fly" aria-label="Color"><svg><use href="#rgb"/></svg></button><button class="fly" aria-label="Invert"><svg><use href="#diag"/></svg></button><button class="fly" aria-label="Hide"><svg><use href="#bulb"/></svg></button><button class="fly" aria-label="Swap hidden"><svg><use href="#bulb2"/></svg></button><button class="fly" aria-label="Lock"><svg><use href="#lock"/></svg></button><button class="fly" aria-label="Layers"><svg><use href="#lay"/></svg></button><button class="fly" aria-label="Color wheel"><svg><use href="#wheel"/></svg></button><button aria-label="Shade"><svg><use href="#sph"/></svg></button><button class="fly" aria-label="Shade selected"><svg><use href="#sphs"/></svg></button><button class="fly" aria-label="Render"><svg><use href="#blue"/></svg></button><button class="fly" aria-label="Spotlight"><svg><use href="#spot"/></svg></button><button class="fly" aria-label="Options"><svg><use href="#gear"/></svg></button><button class="fly" aria-label="Dimension"><svg><use href="#dim"/></svg></button><button class="fly" aria-label="Help"><svg><use href="#help"/></svg></button>
  </div>
</div>
<div class="bar bar2">
  <div class="clusters">
    <button><svg><use href="#clus"/></svg>Cluster A</button><button><svg><use href="#clus"/></svg>Cluster B</button><button><svg><use href="#clus"/></svg>Cluster C</button><button><svg><use href="#clus"/></svg>Custom</button>
  </div>
  <div class="shade">
<button aria-label="Wireframe"><svg><use href="#sph"/></svg></button><button aria-label="Shaded"><svg><use href="#sphs"/></svg></button><button aria-label="X-ray"><svg><use href="#sphc"/></svg></button><button aria-label="Ghosted"><svg><use href="#spha"/></svg></button><button aria-label="Technical"><svg><use href="#sph"/></svg></button><button aria-label="Glow"><svg><use href="#sphy"/></svg></button><button aria-label="Rendered"><svg><use href="#blues"/></svg></button><button aria-label="Flat"><svg><use href="#sphd"/></svg></button><button aria-label="Analysis"><svg><use href="#ball4"/></svg></button><button aria-label="Capture"><svg><use href="#cam"/></svg></button>
  </div>
</div>

<main>
  <aside class="palette">
    <div class="pgrid">
<button aria-label="Select"><svg><use href="#ptr"/></svg></button><button class="fly" aria-label="Point"><svg><use href="#pt"/></svg></button><button class="fly" aria-label="Polyline"><svg><use href="#pl"/></svg></button><button class="fly" aria-label="Curve"><svg><use href="#crv"/></svg></button><button class="fly" aria-label="Circle"><svg><use href="#circ"/></svg></button><button class="fly" aria-label="Ellipse"><svg><use href="#ell"/></svg></button><button class="fly" aria-label="Arc"><svg><use href="#arc"/></svg></button><button class="fly" aria-label="Rectangle"><svg><use href="#rect"/></svg></button><button class="fly" aria-label="Polygon"><svg><use href="#poly"/></svg></button><button class="fly" aria-label="Fillet"><svg><use href="#fil"/></svg></button><button class="fly" aria-label="Surface"><svg><use href="#srf"/></svg></button><button class="fly" aria-label="Bend"><svg><use href="#bend"/></svg></button><button class="fly" aria-label="Box"><svg><use href="#box"/></svg></button><button class="fly" aria-label="Boolean"><svg><use href="#balls"/></svg></button><button class="fly" aria-label="Project"><svg><use href="#cyl"/></svg></button><button class="fly" aria-label="Mesh"><svg><use href="#mesh"/></svg></button><button aria-label="Join"><svg><use href="#puz"/></svg></button><button aria-label="Explode"><svg><use href="#expl"/></svg></button><button aria-label="Trim"><svg><use href="#trim"/></svg></button><button aria-label="Split"><svg><use href="#split"/></svg></button><button class="fly" aria-label="Group"><svg><use href="#grp"/></svg></button><button aria-label="Ungroup"><svg><use href="#ungrp"/></svg></button><button aria-label="Points on"><svg><use href="#ptc"/></svg></button><button class="fly" aria-label="Edit points"><svg><use href="#ptc2"/></svg></button><button aria-label="Text"><svg><use href="#txt"/></svg></button><button class="fly" aria-label="Move"><svg><use href="#mov"/></svg></button><button aria-label="Array"><svg><use href="#arr"/></svg></button><button aria-label="Rotate"><svg><use href="#rotc"/></svg></button><button class="fly" aria-label="Solid edit"><svg><use href="#boxed"/></svg></button><button class="fly" aria-label="Direction"><svg><use href="#ups"/></svg></button>
    </div>
  </aside>

  <section class="mops">
    <h2><span>RhinoCAM 2.0 - Mops</span><i></i><button aria-label="Close">✕</button></h2>
    <div class="tabs"><button class="on"><svg><use href="#gears"/></svg>Setup</button><button><svg><use href="#folds"/></svg>Create</button><button><svg><use href="#sim"/></svg>Simulate</button></div>
    <div class="mtools">
<button aria-label="Machine"><svg><use href="#mach"/></svg></button><hr><button aria-label="Post"><svg><use href="#post"/></svg></button><hr><button aria-label="Preferences"><svg><use href="#gear1"/></svg></button><b></b><button aria-label="Tool library"><svg><use href="#tl"/></svg></button><b></b><hr><button aria-label="Load part"><svg><use href="#stk"/></svg></button><button aria-label="Stock"><svg><use href="#stock"/></svg></button><b></b><button aria-label="Align"><svg><use href="#stkb"/></svg></button><button aria-label="Move stock"><svg><use href="#stkg"/></svg></button>
    </div>
    <ul class="tree">
      <li class="l0"><span class="ex">−</span><svg><use href="#folds"/></svg><strong>Machining Operations</strong></li>
      <li class="l1"><span class="ex">−</span><svg><use href="#gears"/></svg><strong>Setup</strong></li>
      <li class="l2 leaf"><svg><use href="#mach"/></svg><span>Machine - 3 Axis</span></li>
      <li class="l2 leaf"><svg><use href="#post"/></svg><span>Post - Precix</span></li>
      <li class="l2 leaf"><svg><use href="#stock"/></svg><span>Stock - Box Stock</span></li>
      <li class="l1"><span class="ex">−</span><svg><use href="#folds"/></svg><strong>EXT CUT</strong></li>
      <li class="l2"><span class="ex">+</span><svg><use href="#fold"/></svg><span>Hole Pocketing</span></li>
      <li class="l2"><span class="ex">+</span><svg><use href="#fold"/></svg><span>Hole Pocketing</span></li>
      <li class="l2"><span class="ex">+</span><svg><use href="#fold"/></svg><span>2 1/2 Axis Profiling</span></li>
      <li class="l2"><span class="ex">+</span><svg><use href="#fold"/></svg><span>2 1/2 Axis Profiling</span></li>
      <li class="l2"><span class="ex">+</span><svg><use href="#fold"/></svg><span class="cur">Engraving</span></li>
    </ul>
    <div class="vis"><button class="on" aria-label="Show stock"><svg><use href="#stk"/></svg></button><button aria-label="Show tool"><svg><use href="#gog"/></svg></button><button aria-label="Show part"><svg><use href="#gog2"/></svg></button><button aria-label="Show axes"><svg><use href="#gog3"/></svg></button></div>
    <p>Alum-3mm - #1, Dia:3, CRad:0, Taper:0 deg</p>
  </section>

  <section class="tools">
    <h2><span>RhinoCAM 2.0 - Tools</span><i></i><button aria-label="Close">✕</button></h2>
    <div class="ttools"><button aria-label="Create tool"><svg><use href="#tool"/></svg></button><hr><button aria-label="Load library"><svg><use href="#ft"/></svg></button><button aria-label="Save library"><svg><use href="#ftg"/></svg></button><hr><button aria-label="Tool info"><svg><use href="#warn"/></svg></button><hr><button aria-label="Import"><svg><use href="#ft"/></svg></button></div>
    <ul class="tree">
      <li class="l0"><span class="ex">−</span><svg><use href="#bits"/></svg><span>Tools</span></li>
      <li class="l1"><span class="ex">+</span><svg><use href="#bit"/></svg><span>Alum-3mm</span></li>
    </ul>
  </section>

  <section class="viewport">
    <svg viewBox="0 0 276 378" preserveAspectRatio="xMinYMin slice">
      <path d="M0 0h276v233l-52 77L0 187z" fill="#b37f3c"/>
      <path d="M0 187l224 123 52-77" fill="none" stroke="#7c6238" stroke-width=".700"/>
      <g fill="none" stroke-linejoin="round">
        <path d="M88 75h-8L26 123l-7 10L6 180" stroke="#75664e" stroke-width="1.700"/>
        <path d="M6 180l202 110" stroke="#a89877" stroke-width="1.700"/>
        <path d="M208 290l35-21 9-16-5-52-6-68-2-4-10-4" stroke="#6c6250" stroke-width="2"/>
        <path d="M243 268l8-15-5-52-6-68-2-4-9-4" stroke="#b3a68c"/>
        <path d="M88 75l141 50" stroke="#a89c84" stroke-width="1.500" stroke-dasharray="8 1"/>
        <path d="M87 80l142 51" stroke="#6f675a" stroke-width="2.500"/>
        <path d="M88 79l140 50" stroke="#bdb19a" stroke-width="1.200" stroke-dasharray="6 3"/>
        <path d="M42 115l19-16M30 127l37-1M53 193l16-15M67 201l16-16M117 224l8-11" stroke="#66583f" stroke-width="2"/>
        <path d="M45 126l22-1" stroke="#a4957c" stroke-dasharray="3 1"/>
        <path d="M53 192l15-14M67 200l15-15M117 223l7-10" stroke="#94856a" stroke-width=".600"/>
        <path d="M234 164l3 29" stroke="#72654e" stroke-width="2.500"/><path d="M235 164l3 29" stroke="#b5a68c"/>
        <path d="M133 211l39 17" stroke="#75664e" stroke-width="1.800"/><path d="M133 211l39 16" stroke="#bba984" stroke-dasharray="8 4"/>
      </g>
      <g fill="#6c5c44"><circle cx="80" cy="86" r=".800"/><circle cx="65" cy="99" r=".800"/><circle cx="176" cy="235" r="1"/><circle cx="219" cy="253" r="1"/><circle cx="228" cy="142" r=".800"/><circle cx="229" cy="160" r=".800"/></g>
      <g transform="translate(155 251) rotate(30)"><text class="engr">PARDAL</text></g>
      <path d="M23 344v13l9-11M23 357l15 8" fill="none" stroke="#444" stroke-width=".800"/>
      <g class="axis"><text x="25" y="346">z</text><text x="34" y="347">y</text><text x="40" y="366">x</text></g>
    </svg>
    <h2>Perspective</h2>
  </section>

  <aside class="right">
    <section class="props">
      <h2><span>Properties</span><i></i><button aria-label="Close">✕</button></h2>
      <h3 class="first"><span>Viewport</span></h3>
      <table>
        <tr><th>Title</th><td>Perspective</td></tr>
        <tr class="off"><th>Width</th><td>440</td></tr>
        <tr class="off"><th>Height</th><td>607</td></tr>
        <tr><th><label for="proj">Projection</label></th><td class="ctl"><span class="selbox"><select id="proj"><option>Perspective</option></select></span></td></tr>
      </table>
      <h3>Camera</h3>
      <table>
        <tr><th>Lens Length</th><td>50.0</td></tr>
        <tr><th>X Location</th><td>2956.763</td></tr>
        <tr><th>Y Location</th><td>6.325</td></tr>
        <tr><th>Z Location</th><td>902.485</td></tr>
        <tr><th>Location</th><td class="ctl"><button class="place">Place...</button></td></tr>
      </table>
      <h3>Target</h3>
      <table>
        <tr><th>X Target</th><td>2529.019</td></tr>
        <tr><th>Y Target</th><td>642.894</td></tr>
        <tr><th>Z Target</th><td>41.694</td></tr>
        <tr><th>Location</th><td class="ctl"><button class="place">Place...</button></td></tr>
      </table>
      <h3>Wallpaper</h3>
      <table>
        <tr><th>Filename</th><td class="ctl"><div class="file">(none)<button aria-label="Browse">...</button></div></td></tr>
        <tr><th><label for="show">Show</label></th><td class="chk"><input id="show" type="checkbox" checked></td></tr>
        <tr><th><label for="gray">Gray</label></th><td class="chk"><input id="gray" type="checkbox" checked></td></tr>
      </table>
    </section>
    <section class="layers">
      <h2><span>Layers - All Layers</span><i></i><button aria-label="Close">✕</button></h2>
      <div class="ltools">
        <button aria-label="New layer"><svg><use href="#new"/></svg></button><button aria-label="New sublayer"><svg><use href="#copy"/></svg></button><button aria-label="Delete"><svg viewBox="0 0 16 16"><path d="M3 3l10 10M13 3L3 13" stroke="#666" stroke-width="1.500"/></svg></button><button aria-label="Up"><svg viewBox="0 0 16 16"><path d="M8 5l6 7H2z"/></svg></button><button aria-label="Down"><svg viewBox="0 0 16 16"><path d="M8 12l6-7H2z" fill="#666"/></svg></button><button aria-label="Left"><svg viewBox="0 0 16 16"><path d="M5 8l6-6v12z" fill="#666"/></svg></button><button aria-label="Filter"><svg viewBox="0 0 16 16"><path d="M2 2h12L9 9v5H7V9z" fill="#eee" stroke="#444" stroke-width="1.500"/></svg></button><button aria-label="Tools"><svg viewBox="0 0 16 16"><path d="M2 14l8-8M6 3c4-2 6 0 8 5" fill="none" stroke="#444" stroke-width="2"/></svg></button><button class="q" aria-label="Help">?</button>
      </div>
      <div class="list">
        <table>
          <colgroup><col class="cn"><col class="ci"><col class="ci"><col class="ci"><col class="ci"><col class="ci"><col></colgroup>
          <thead><tr><th>Name</th><th></th><th></th><th></th><th></th><th></th><th>Material L</th></tr></thead>
          <tbody>
          <tr class="cut"><td>CUT-3MM Z-4.5</td><td><svg viewBox="0 0 10 10"><path d="M1 5l3 3 5-6" fill="none" stroke="#111" stroke-width="1.500"/></svg></td><td></td><td></td><td><i class="sw red"></i></td><td><i class="mat"></i></td><td></td></tr>
          <tr><td>ENGRAVE-? 90º Z-?</td><td></td><td><svg class="yb"><use href="#ybulb"/></svg></td><td><svg><use href="#ulock"/></svg></td><td><i class="sw blu"></i></td><td><i class="mat"></i></td><td></td></tr>
          <tr><td>ENGRAVE-3MM Z-2</td><td></td><td><svg class="yb"><use href="#ybulb"/></svg></td><td><svg><use href="#ulock"/></svg></td><td><i class="sw grn"></i></td><td><i class="mat"></i></td><td></td></tr>
          <tr class="sel"><td>PATHS - for 4mm</td><td></td><td><svg class="bb"><use href="#ybulb"/></svg></td><td><svg><use href="#ulock"/></svg></td><td><i class="sw blk"></i></td><td><i class="mat"></i></td><td></td></tr>
          </tbody>
        </table>
        <div class="hscroll"><button class="sq" aria-label="Scroll left">◂</button><span></span><button class="sq" aria-label="Scroll right">▸</button></div>
      </div>
    </section>
  </aside>
</main>

<section class="osnap">
  <label><input type="checkbox">End</label><label><input type="checkbox" checked>Near</label><label><input type="checkbox" checked>Point</label><label><input type="checkbox" checked>Mid</label><label><input type="checkbox" checked>Cen</label><label><input type="checkbox" checked>Int</label><label><input type="checkbox">Perp</label><label><input type="checkbox">Tan</label><label><input type="checkbox" checked>Quad</label><label><input type="checkbox">Knot</label><label><input type="checkbox">Project</label><label><input type="checkbox" class="mix">STrack</label><label><input type="checkbox">Disable</label>
</section>
<footer class="taskbar">
  <button class="start"><svg><use href="#flag"/></svg>Start</button>
  <button class="task"><svg><use href="#open"/></svg>TOUCH</button>
  <button class="task"><svg><use href="#open"/></svg>Posts</button>
  <button class="task on"><svg><use href="#rhino"/></svg>TOUCH.4CAM-N - Rhin...</button>
  <div class="tray"><svg><use href="#net"/></svg><svg><use href="#netx"/></svg><svg class="gap"><use href="#dia"/></svg><svg><use href="#vol"/></svg><svg><use href="#mouse"/></svg><svg><use href="#pen"/></svg><time>15:04</time></div>
</footer>
</body>
</html>
```
FILE: styles.css
```css
:root {
  --face: #c9c5bd;
  --hi: #efede8;
  --lo: #85817a;
  --navy: #0b1f63;
  --ui: "DejaVu Sans Condensed", "Noto Sans", sans-serif;
  --ms: "Liberation Sans", Arial, sans-serif;
}
* { box-sizing: border-box; }
body {
  margin: 0;
  height: 100vh;
  display: flex;
  flex-direction: column;
  overflow: hidden;
  background: var(--face);
  color: #333;
  font: 7px/10px var(--ui);
}
h1, h2, h3, p, ul { margin: 0; padding: 0; font: inherit; }
ul { list-style: none; }
button {
  margin: 0;
  padding: 0;
  border: 0;
  background: none;
  color: inherit;
  font: inherit;
  display: flex;
  align-items: center;
  justify-content: center;
  white-space: nowrap;
}
hr { width: 2px; height: 14px; margin: 0; border: 0; border-left: 1px solid var(--lo); border-right: 1px solid var(--hi); }
svg { display: block; flex: none; }
.defs { position: absolute; width: 0; height: 0; }
.fly { position: relative; }
.fly::after {
  content: "";
  position: absolute;
  right: 1px;
  bottom: 1px;
  border: 1px solid #fff;
  border-left-color: transparent;
  border-top-color: transparent;
}

.titlebar {
  flex: none;
  height: 11px;
  display: flex;
  align-items: center;
  gap: 1px;
  padding: 0 1px;
  background: linear-gradient(90deg, #0c2468, #9cc2ee);
  color: #fff;
}
.i10 { width: 10px; height: 10px; }
.titlebar h1 { flex: 1; font-weight: bold; }
.winbtns { display: flex; }
.winbtns button, .sq, .spin button, .start, .task, .place, .file button {
  background: var(--face);
  border: 1px solid;
  border-color: var(--hi) #55524c #55524c var(--hi);
}
.winbtns button { width: 10px; height: 9px; }
.winbtns svg { width: 7px; height: 7px; }
.winbtns .close { margin-left: 2px; }

.menu {
  flex: none;
  height: 13px;
  padding: 1px 3px;
  border-bottom: 1px solid var(--lo);
}
.items { display: flex; justify-content: space-between; width: 59%; }
.menu a { color: #3a3a3a; text-decoration: none; white-space: nowrap; }

.command {
  flex: none;
  height: 29px;
  padding: 2px 2px 0 4px;
  border-bottom: 3px solid #8f8b84;
}
.cmdrow {
  height: 11px;
  display: flex;
  align-items: center;
  background: #fff;
  border-left: 1px solid var(--lo);
  border-bottom: 1px solid var(--lo);
  color: #666;
}
.cmdrow output { flex: 1; }
.prompt { border-bottom: 0; color: #111; }
.prompt label { font-weight: bold; }
.prompt input { flex: 1; min-width: 0; height: 10px; border: 0; padding: 0; background: #fff; font: inherit; }
.spin { width: 9px; height: 11px; }
.spin button { width: 9px; height: 5px; }
.sq { width: 10px; height: 11px; color: #111; }
.thumb { width: 5px; height: 11px; border: 1px solid var(--lo); background: var(--face); }
.trough { width: 3px; height: 11px; background: #e8e6e2; }
.corner { width: 9px; height: 11px; background: var(--face); }

.bar { flex: none; display: flex; }
.bar svg { width: 14px; height: 14px; }
.bar1 { height: 19px; border-bottom: 1px solid var(--lo); }
.bar2 { height: 17px; border-bottom: 1px solid var(--lo); }
.std {
  width: 77%;
  padding-left: 4px;
  display: grid;
  grid-template-columns: repeat(35, 1fr);
  border-right: 1px solid var(--lo);
}
.clusters { display: flex; padding-left: 6px; border-right: 1px solid var(--lo); }
.clusters button { width: 49px; gap: 3px; justify-content: flex-start; color: #555; }
.clusters button:last-child { width: 43px; }
.shade {
  width: 22%;
  margin-left: 120px;
  padding-left: 3px;
  display: grid;
  grid-template-columns: repeat(10, 1fr);
  border-left: 1px solid var(--lo);
  border-right: 1px solid var(--lo);
}

main {
  flex: 1;
  min-height: 0;
  display: grid;
  grid-template-columns: 37px 192px 111px 1fr 184px;
}
main > * { min-width: 0; min-height: 0; }
.palette { border-right: 1px solid var(--lo); padding-top: 6px; }
.pgrid {
  height: 264px;
  display: grid;
  grid-template-columns: 1fr 1fr;
  grid-auto-rows: 1fr;
  border-bottom: 1px solid var(--lo);
  background: linear-gradient(var(--lo), var(--lo)) 50% 0 / 1px 100% no-repeat;
}
.pgrid svg { width: 13px; height: 13px; }

h2 { flex: none; height: 12px; display: flex; align-items: center; gap: 3px; white-space: nowrap; color: #444; }
h2 i { flex: 1; height: 4px; background: #98948d; }
h2 button { width: 8px; color: #111; font: bold 7px/8px "DejaVu Sans", sans-serif; }

.mops { display: flex; flex-direction: column; padding: 1px 3px 0 1px; border-right: 2px solid #8f8b84; }
.mops h2 { margin-right: 2px; }
.tabs { flex: none; display: flex; height: 19px; padding-top: 1px; }
.tabs button {
  gap: 3px;
  padding: 0 2px;
  height: 17px;
  border-top: 1px solid var(--hi);
  border-right: 2px solid #55524c;
}
.tabs svg { width: 15px; height: 15px; }
.tabs .on { height: 18px; padding: 0 3px 0 4px; }
.mtools { flex: none; display: flex; align-items: center; justify-content: space-between; height: 28px; border-top: 1px solid var(--hi); padding: 0 0 0 1px; }
.mtools svg { width: 15px; height: 15px; }
.mtools b { border: 2px solid transparent; border-top-color: #111; border-bottom: 0; }
.tree { background: #fff; border: 1px solid; border-color: #55524c var(--hi) var(--hi) #55524c; }
.mops .tree {
  flex: 1;
  min-height: 0;
  margin-right: 2px;
  display: grid;
  grid-template-rows: repeat(11, minmax(12px, 4fr)) 46fr;
}
.tree li { display: flex; align-items: center; position: relative; white-space: nowrap; }
.tree svg { width: 12px; height: 12px; }
.tree strong, .tree li > span:last-child { margin-left: 4px; }
.tree strong { color: #111; }
.ex {
  width: 7px;
  height: 7px;
  border: 1px solid #888;
  background: #fff;
  color: #111;
  font: 7px/5px var(--ms);
  text-align: center;
  margin-right: 4px;
  position: relative;
  z-index: 1;
}
.l0 { padding-left: 5px; }
.l1 { padding-left: 19px; }
.l2 { padding-left: 34px; }
.leaf { padding-left: 45px; }
.l1::before, .l2::before {
  content: "";
  position: absolute;
  left: 22px;
  top: 0;
  bottom: 0;
  border-left: 1px dotted #999;
}
.l2::before { left: 37px; }
.leaf::after { content: ""; position: absolute; left: 38px; top: 6px; width: 6px; border-top: 1px dotted #999; }
.cur { background: #cfccc5; padding: 0 3px 0 1px; }
.vis { flex: none; display: flex; gap: 2px; height: 23px; align-items: center; }
.vis button { width: 14px; height: 14px; }
.vis svg { width: 11px; height: 11px; }
.vis .on { border: 1px solid; border-color: var(--lo) var(--hi) var(--hi) var(--lo); background: #dddad4; }
.mops p { flex: none; height: 14px; line-height: 14px; white-space: nowrap; color: #444; }

.tools { display: flex; flex-direction: column; padding: 1px 6px 0 2px; border-left: 1px solid var(--hi); }
.tools h2 { margin-right: -2px; }
.ttools { flex: none; display: flex; align-items: center; justify-content: space-between; height: 19px; margin-right: -3px; }
.ttools svg { width: 14px; height: 14px; }
.tools .tree { flex: 1; }
.tools .tree li { height: 12px; }

.viewport { position: relative; overflow: hidden; background: #8e8e8e; border-right: 1px solid var(--lo); border-bottom: 1px solid var(--lo); }
.viewport > svg { width: 100%; height: 100%; }
.viewport h2 {
  position: absolute;
  left: 1px;
  top: 1px;
  height: 11px;
  padding: 0 5px 0 3px;
  background: var(--navy);
  color: #fff;
  font: bold 8px/11px var(--ui);
}
.engr { font: 14px var(--ms); fill: #b0803f; stroke: #6a512c; stroke-width: .5px; text-shadow: 1px 0 0 #dcae6c; }
.axis { font: 7px var(--ui); fill: #333; }

.right { display: flex; flex-direction: column; font-family: var(--ms); border-left: 2px solid #aca89f; }
.props { flex: none; height: 265px; padding: 1px 3px 0 4px; border-bottom: 2px solid #9c9890; }
.props h3 { height: 12px; line-height: 12px; margin-left: 2px; color: #444; }
.props .first { display: flex; align-items: center; gap: 3px; height: 13px; }
.first::after { content: ""; flex: 1; border-top: 1px solid var(--lo); }
table { border-collapse: collapse; table-layout: fixed; }
.props table { width: 171px; margin-left: 4px; background: #fff; }
.props tr { height: 12px; }
.props th, .props td { padding: 0 2px; height: 12px; border: 1px solid #c6c3bc; font-weight: normal; text-align: left; line-height: 10px; width: 51%; }
.props th { width: 49%; }
.off { color: #8c8c8c; }
.off td { background: var(--face); }
.props .ctl { padding: 0; }
.props td input { display: block; }
.selbox { display: block; position: relative; }
.selbox select {
  display: block;
  appearance: none;
  width: 100%;
  height: 10px;
  border: 0;
  padding: 0 2px;
  background: #fff;
  color: inherit;
  font: inherit;
}
.selbox::after {
  content: "▾";
  position: absolute;
  right: 0;
  top: 0;
  width: 10px;
  height: 10px;
  background: var(--face);
  border: 1px solid;
  border-color: var(--hi) #55524c #55524c var(--hi);
  color: #111;
  font: 8px/8px "DejaVu Sans", sans-serif;
  text-align: center;
  pointer-events: none;
}
.place { width: 100%; height: 10px; border-color: var(--hi) var(--lo) var(--lo) var(--hi); }
.file { display: flex; justify-content: space-between; height: 10px; padding-left: 2px; }
.file button { width: 11px; height: 10px; border-color: var(--hi) var(--lo) var(--lo) var(--hi); line-height: 6px; }

input[type="checkbox"] {
  appearance: none;
  flex: none;
  width: 8px;
  height: 8px;
  margin: 0;
  border: 1px solid;
  border-color: #44423e var(--hi) var(--hi) #44423e;
  background: #fff;
}
input[type="checkbox"]:checked::after {
  content: "";
  display: block;
  width: 2px;
  height: 4px;
  margin: 0 0 0 2px;
  border: solid #111;
  border-width: 0 1px 1px 0;
  transform: rotate(40deg);
  box-sizing: content-box;
}
.props .chk input { border-color: #333; }
.mix:not(:checked) { background: #777 !important; }

.layers { flex: 1; display: flex; flex-direction: column; padding: 0 1px 1px 3px; min-height: 0; }
.ltools { flex: none; display: flex; gap: 5px; height: 13px; align-items: center; padding-left: 1px; }
.ltools svg { width: 8px; height: 8px; }
.q { font: bold 8px/8px var(--ms); width: 8px; color: #111; }
.list { flex: 1; min-height: 0; display: flex; flex-direction: column; justify-content: space-between; background: #fff; border: 1px solid #55524c; }
.list table { width: 100%; }
.cn { width: 90px; }
.ci { width: 11px; }
.list th { background: var(--face); height: 11px; padding: 0 3px; border-right: 1px solid var(--lo); border-bottom: 1px solid var(--lo); text-align: left; font-weight: normal; white-space: nowrap; line-height: 9px; }
.list th:last-child { padding: 0; border-right: 0; }
.list td { height: 9px; padding: 0 0 0 1px; line-height: 8px; border-bottom: 1px solid #eae8e4; white-space: nowrap; }
.list td:first-child { padding-left: 4px; }
.list td svg { width: 8px; height: 8px; }
.list td .yb { color: #f8e048; }
.list td .bb { color: #58a8e8; }
.cut { background: #eeedea; color: #111; font-weight: bold; }
.sel { background: var(--navy); color: #fff; }
.sw { display: block; width: 7px; height: 7px; border: 1px solid #222; }
.red { background: #c82418; }
.blu { background: #1838d8; }
.grn { background: #58d838; }
.blk { background: #222; border-color: #ddd; }
.mat { display: block; width: 7px; height: 7px; border: 1px solid #ccc; border-radius: 50%; background: #fff; }
.hscroll { display: flex; height: 10px; background: #e6e4df; }
.hscroll .sq { height: 10px; }
.hscroll span { width: 90px; margin-right: auto; background: var(--face); border: 1px solid; border-color: var(--hi) #55524c #55524c var(--hi); }

.osnap {
  flex: none;
  height: 16px;
  display: grid;
  grid-template-columns: repeat(13, 34px);
  align-items: center;
  padding-left: 5px;
  border-top: 1px solid var(--lo);
  border-bottom: 1px solid var(--lo);
}
.osnap label { display: flex; align-items: center; gap: 2px; white-space: nowrap; color: #444; }

.taskbar { flex: none; height: 17px; display: flex; align-items: center; gap: 2px; padding: 0 2px; border-top: 1px solid var(--hi); }
.taskbar svg { width: 10px; height: 10px; }
.taskbar button { height: 14px; gap: 2px; }
.start { width: 32px; font-weight: bold; color: #111; margin-right: 1px; }
.taskbar .start { gap: 0; }
.task { width: 100px; justify-content: flex-start; padding: 0 2px; overflow: hidden; }
.taskbar .on { border-color: #55524c var(--hi) var(--hi) #55524c; background: #e6e4df; font-weight: bold; color: #111; }
.tray { margin-left: auto; display: flex; align-items: center; gap: 2px; width: 107px; height: 13px; padding: 0 2px; border: 1px solid; border-color: var(--lo) var(--hi) var(--hi) var(--lo); }
.tray .gap { margin-left: 10px; }
.tray time { margin-left: auto; }
```
